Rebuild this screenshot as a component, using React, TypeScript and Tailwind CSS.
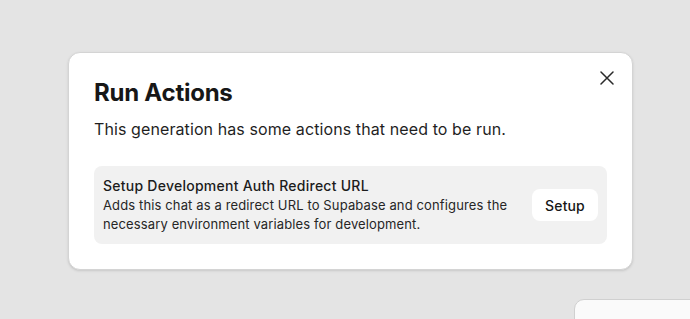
import React from 'react'

export default function App() {
  return (
    <div className="relative w-[690px] h-[319px] overflow-hidden bg-[#e4e4e4] font-['Inter',sans-serif] text-[#171717]">
      <div className="pt-[52px] pl-[68px]">
        <div className="relative w-[565px] h-[218px] rounded-[12px] bg-white border border-[#d4d4d4] shadow-sm px-[25px] pt-[24px]">
          <button className="absolute left-[531px] top-[18px] text-[#2a2a2a]">
            <svg width="14" height="14" viewBox="0 0 14 14" fill="none" stroke="currentColor" strokeWidth="1.5" strokeLinecap="round">
              <path d="M1 1L13 13M13 1L1 13" />
            </svg>
          </button>
          <h2 className="text-[24px] leading-[32px] font-bold tracking-[-0.01em]">Run Actions</h2>
          <p className="mt-[8px] text-[16px] leading-[24px] tracking-[0.006em] text-[#1f1f1f]">
            This generation has some actions that need to be run.
          </p>
          <div className="mt-[25px] flex items-center justify-between rounded-[8px] bg-[#f1f1f1] pl-[9px] pr-[9px] py-[10px]">
            <div className="flex flex-col">
              <div className="text-[14px] leading-[20px] font-medium tracking-[0.018em] text-[#1c1c1c]">Setup Development Auth Redirect URL</div>
              <div className="text-[13px] leading-[19px] tracking-[0.01em] text-[#262626]">
                Adds this chat as a redirect URL to Supabase and configures the
                <br />
                necessary environment variables for development.
              </div>
            </div>
            <button className="w-[66px] h-[32px] rounded-[8px] bg-white text-[14px] font-medium tracking-[0.01em]">Setup</button>
          </div>
        </div>
      </div>
      <div className="absolute left-[574px] top-[299px] w-[140px] h-[60px] rounded-[10px] bg-[#fafafa] border border-[#d0d0d0]" />
    </div>
  )
}
